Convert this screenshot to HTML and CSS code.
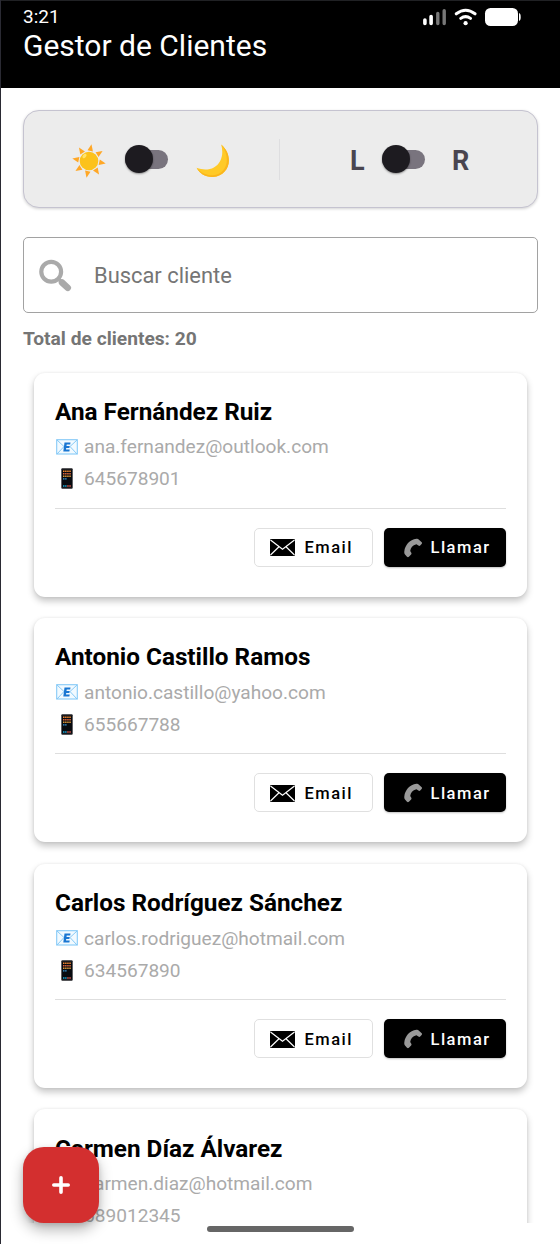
FILE: index.html
```html
<!DOCTYPE html>
<html lang="es">
<head>
<meta charset="utf-8">
<title>Gestor de Clientes</title>
<link rel="stylesheet" href="styles.css">
</head>
<body>
<svg class="defs" aria-hidden="true">
  <symbol id="mail" viewBox="0 0 22 16">
    <rect x=".7" y=".7" width="20.6" height="14.3" fill="#f2faff" stroke="#86caf7" stroke-width="1.1"/>
    <path d="M1 1l7 6.5L1 15M21 1l-7 6.5 7 7.500" fill="none" stroke="#86caf7"/>
    <path d="M8.500 3.500h6l-.3 2.100h-3.500l-.2 1.300h3.200l-.3 2h-3.200l-.2 1.500h3.700l-.3 2.100H7.300z" fill="#1976d2"/>
  </symbol>
  <symbol id="mobile" viewBox="0 0 12 21">
    <rect x=".3" y=".3" width="11.400" height="20.400" rx="1" fill="#202024"/>
    <rect x="1" y="1.800" width="10" height="17.500" fill="#080b10"/>
    <path d="M2 3.300h8" stroke="#f58a32" stroke-width="1.500" stroke-dasharray="1.500 .6"/>
    <path d="M2 5.800h8" stroke="#e0663c" stroke-width="1.500" stroke-dasharray="1.500 .6"/>
    <path d="M2 8.300h8" stroke="#e09a3a" stroke-width="1.500" stroke-dasharray="1.500 .6"/>
    <path d="M2 10.800h3.700" stroke="#3d9fe0" stroke-width="1.300" stroke-dasharray="1.500 .6"/>
    <path d="M2 18h3.700" stroke="#19a9d8" stroke-width="1.500" stroke-dasharray="1.500 .6"/>
    <path d="M6.200 18h3.800" stroke="#e05a50" stroke-width="1.500" stroke-dasharray="1.500 .6"/>
  </symbol>
  <symbol id="envelope" viewBox="0 0 25 17">
    <rect width="25" height="17" rx="1" fill="#000"/>
    <path d="M.5 1l12 9.300L24.500 1M.5 16l8.500-8.200M24.500 16L16 7.800" fill="none" stroke="#fff" stroke-width="1.200"/>
  </symbol>
  <symbol id="phone" viewBox="0 0 20 20">
    <path d="M1.300 13.500C2 7 6.500 2 13.500.8c1-.2 1.500 0 2.200.6l3 2.900c.6.600.4 1.200-.1 1.800l-1.400 1.400c-.5.500-1.200.5-1.800.1l-2-1.300C9.500 7.500 7.600 9.800 7.200 13l1.100 1.700c.4.600.3 1.200-.2 1.700l-2.200 2.300c-.6.600-1.300.6-1.900 0l-2-2.200c-.7-.8-.8-1.800-.7-3z" fill="#999"/>
  </symbol>
</svg>
<div class="screen">
  <header class="header">
    <div class="status">
      <span class="time">3:21</span>
      <svg class="status-icons" viewBox="0 0 102 20">
        <path d="M4.900 13v3.500M11.100 9.500v7" stroke="#fff" stroke-width="3.600" stroke-linecap="round"/>
        <path d="M17.800 6.500v10M24.200 3.700v12.800" stroke="#777" stroke-width="3.400" stroke-linecap="round"/>
        <g fill="none" stroke="#fff" stroke-width="3" stroke-linecap="round">
          <path d="M36.300 6.800Q45.600-.2 55 6.800M40.800 11.400Q45.600 7.800 50.500 11.400"/>
        </g>
        <circle cx="45.600" cy="16.200" r="2.100" fill="#fff"/>
        <rect x="65" y="1" width="33" height="18" rx="5.500" fill="#fff"/>
        <path d="M99 6c2.300.3 2.300 7.700 0 8z" fill="#fff"/>
      </svg>
    </div>
    <h1 class="title">Gestor de Clientes</h1>
  </header>
  <main class="main">
    <section class="settings">
      <div class="group group-theme">
        <svg class="sun" viewBox="0 0 34 34">
          <g fill="#ffa726">
            <path d="M15.500 6.200L19.500.3l1.400 7.100z"/><path d="M15.500 6.200L19.500.3l1.400 7.100z" transform="rotate(45 17 17)"/><path d="M15.500 6.200L19.500.3l1.400 7.100z" transform="rotate(90 17 17)"/><path d="M15.500 6.200L19.500.3l1.400 7.100z" transform="rotate(135 17 17)"/><path d="M15.500 6.200L19.500.3l1.400 7.100z" transform="rotate(180 17 17)"/><path d="M15.500 6.200L19.500.3l1.400 7.100z" transform="rotate(225 17 17)"/><path d="M15.500 6.200L19.500.3l1.400 7.100z" transform="rotate(270 17 17)"/><path d="M15.500 6.200L19.500.3l1.400 7.100z" transform="rotate(315 17 17)"/>
          </g>
          <circle cx="17" cy="17" r="9.300" fill="#fcc21b"/>
          <ellipse cx="12.500" cy="12" rx="1.600" ry="2.600" transform="rotate(38 12.500 12)" fill="#ffe36b"/>
        </svg>
        <span class="switch"></span>
        <svg class="moon" viewBox="0 0 34 34">
          <path d="M25.200.5C39 12.500 33 32 17 33 9.500 33.400 3.500 29.500.6 23.800c9.400 3.700 19.200 1.400 23.300-6.300 2.900-5.400 2.900-11 1.300-17z" fill="#ffca28"/>
          <path d="M25.200.5C39 12.500 33 32 17 33 9.500 33.400 3.500 29.500.6 23.800 4.500 28.500 10 31.500 17 31.300 31 30 35.500 14 25.200.5z" fill="#fbb61d"/>
        </svg>
      </div>
      <div class="group group-side">
        <span class="side-l">L</span><span class="switch"></span><span class="side-r">R</span>
      </div>
    </section>
    <div class="search">
      <svg class="lens" viewBox="0 0 33 33">
        <circle cx="12.200" cy="12.700" r="9.900" fill="none" stroke="#aaa" stroke-width="4.200"/>
        <path d="M19 19.500l3 3" stroke="#aaa" stroke-width="3.500"/>
        <path d="M23 23.500l5.800 5.400" stroke="#aaa" stroke-width="6.500" stroke-linecap="round"/>
      </svg>
      <span class="hint">Buscar cliente</span>
    </div>
    <p class="total">Total de clientes: 20</p>
    <div class="list">
      <article class="card">
        <h2 class="name">Ana Fernández Ruiz</h2>
        <p class="line"><svg class="i-mail"><use href="#mail"/></svg><span>ana.fernandez@outlook.com</span></p>
        <p class="line"><svg class="i-mobile"><use href="#mobile"/></svg><span>645678901</span></p>
        <div class="actions"><span class="btn btn-email"><svg class="i-env"><use href="#envelope"/></svg>Email</span><span class="btn btn-call"><svg class="i-phone"><use href="#phone"/></svg>Llamar</span></div>
      </article>
      <article class="card">
        <h2 class="name">Antonio Castillo Ramos</h2>
        <p class="line"><svg class="i-mail"><use href="#mail"/></svg><span>antonio.castillo@yahoo.com</span></p>
        <p class="line"><svg class="i-mobile"><use href="#mobile"/></svg><span>655667788</span></p>
        <div class="actions"><span class="btn btn-email"><svg class="i-env"><use href="#envelope"/></svg>Email</span><span class="btn btn-call"><svg class="i-phone"><use href="#phone"/></svg>Llamar</span></div>
      </article>
      <article class="card">
        <h2 class="name">Carlos Rodríguez Sánchez</h2>
        <p class="line"><svg class="i-mail"><use href="#mail"/></svg><span>carlos.rodriguez@hotmail.com</span></p>
        <p class="line"><svg class="i-mobile"><use href="#mobile"/></svg><span>634567890</span></p>
        <div class="actions"><span class="btn btn-email"><svg class="i-env"><use href="#envelope"/></svg>Email</span><span class="btn btn-call"><svg class="i-phone"><use href="#phone"/></svg>Llamar</span></div>
      </article>
      <article class="card">
        <h2 class="name">Carmen Díaz Álvarez</h2>
        <p class="line"><svg class="i-mail"><use href="#mail"/></svg><span>carmen.diaz@hotmail.com</span></p>
        <p class="line"><svg class="i-mobile"><use href="#mobile"/></svg><span>689012345</span></p>
      </article>
    </div>
  </main>
  <div class="fab"><svg class="plus" viewBox="0 0 18 18"><path d="M9 1.800v14.400M1.800 9h14.400" stroke="#fff" stroke-width="3.600" stroke-linecap="round"/></svg></div>
  <div class="home-bar"></div>
</div>
</body>
</html>
```
FILE: styles.css
```css
* { box-sizing: border-box; }
body { margin: 0; font-family: Roboto, "Liberation Sans", sans-serif; }
h1, h2, p { margin: 0; }
svg { display: block; flex: none; }
.defs { position: absolute; width: 0; height: 0; }
.screen { position: relative; width: 560px; height: 1244px; overflow: hidden; background: #fff; border-left: 1px solid #2a2a33; display: flex; flex-direction: column; }
.header { height: 88px; flex: none; background: #000; border-top: 1px solid #202124; color: #fff; padding: 6px 38px 0 22px; }
.status { display: flex; justify-content: space-between; height: 20px; align-items: center; }
.time { font-size: 19px; line-height: 20px; }
.status-icons { width: 102px; height: 20px; }
.title { font-weight: 400; font-size: 30px; line-height: 38px; }
.main { flex: none; height: 1135px; padding: 22px 22px 0; display: flex; flex-direction: column; }
.settings { height: 98px; flex: none; display: flex; background: #ececec; border: 1px solid #c5c3d0; border-radius: 16px; box-shadow: 0 1px 3px rgba(0,0,0,.18); }
.group { display: flex; align-items: center; }
.group-theme { width: 256px; padding-left: 48px; position: relative; }
.group-theme::after { content: ""; position: absolute; right: 0; top: 28px; width: 1px; height: 41px; background: #dedee0; }
.group-side { padding-left: 70px; }
.sun { width: 34px; height: 34px; margin-top: 3px; }
.moon { width: 34px; height: 34px; margin: 3px 0 0 28px; }
.switch { position: relative; width: 43px; height: 19px; border-radius: 10px; background: #79747e; margin-left: 19px; }
.group-side .switch { margin-left: 18px; }
.switch::before { content: ""; position: absolute; left: 0; top: -4.500px; width: 28px; height: 28px; border-radius: 50%; background: #1d1b20; box-shadow: 0 1px 2px rgba(0,0,0,.4); }
.side-l, .side-r { font-size: 27px; line-height: 32px; font-weight: 700; color: #49454f; margin-top: 3px; }
.side-l { width: 14px; }
.side-r { margin-left: 27px; }
.search { height: 76px; flex: none; margin-top: 29px; border: 1.500px solid #a2a2a2; border-radius: 5px; display: flex; align-items: center; padding-left: 15px; }
.lens { width: 33px; height: 33px; }
.hint { margin-left: 22px; font-size: 21.900px; color: #757575; }
.total { margin-top: 13.500px; font-size: 19.200px; line-height: 24px; font-weight: 700; color: #757575; }
.list { flex: 1; min-height: 0; margin: 10px -11px 0; padding: 12px 22px 0; overflow: hidden; display: flex; flex-direction: column; gap: 21.670px; }
.card { height: 224px; flex: none; background: #fff; border-radius: 11px; padding: 23.300px 21.500px 0 21px; box-shadow: 0 4px 7px rgba(0,0,0,.23), 0 0 3px rgba(0,0,0,.07); }
.name { font-size: 24.300px; line-height: 32px; font-weight: 700; color: #000; white-space: nowrap; }
.line { display: flex; align-items: center; height: 32px; font-size: 19.100px; color: #aaa; }
.name + .line { margin-top: 3px; }
.i-mail { width: 22px; height: 16px; margin: 0 6px 0 1px; }
.i-mobile { width: 12px; height: 21px; margin: 0 11px 0 6px; }
.actions { margin-top: 13px; border-top: 1.500px solid #dedede; padding-top: 19px; display: flex; justify-content: flex-end; gap: 11px; }
.btn { display: flex; align-items: center; height: 39px; border-radius: 5px; font-size: 16.500px; font-weight: 500; letter-spacing: 1.500px; padding-top: 1px; }
.btn-email { width: 119px; border: 1.500px solid #e0e0e0; padding-left: 15px; color: #000; }
.btn-call { width: 122px; background: #000; color: #fff; padding-left: 19px; box-shadow: 0 1px 2px rgba(0,0,0,.25); }
.i-env { width: 25px; height: 17px; margin-right: 10px; }
.i-phone { width: 20px; height: 20px; margin-right: 8px; }
.fab { position: absolute; left: 22px; top: 1147px; width: 76px; height: 76px; border-radius: 21px; background: #d32f2f; display: flex; align-items: center; justify-content: center; box-shadow: 0 7px 14px rgba(0,0,0,.28), 0 2px 5px rgba(0,0,0,.12); }
.plus { width: 18px; height: 18px; }
.home-bar { position: absolute; left: 206px; top: 1226px; width: 147px; height: 6px; border-radius: 3px; background: #666; }
```
